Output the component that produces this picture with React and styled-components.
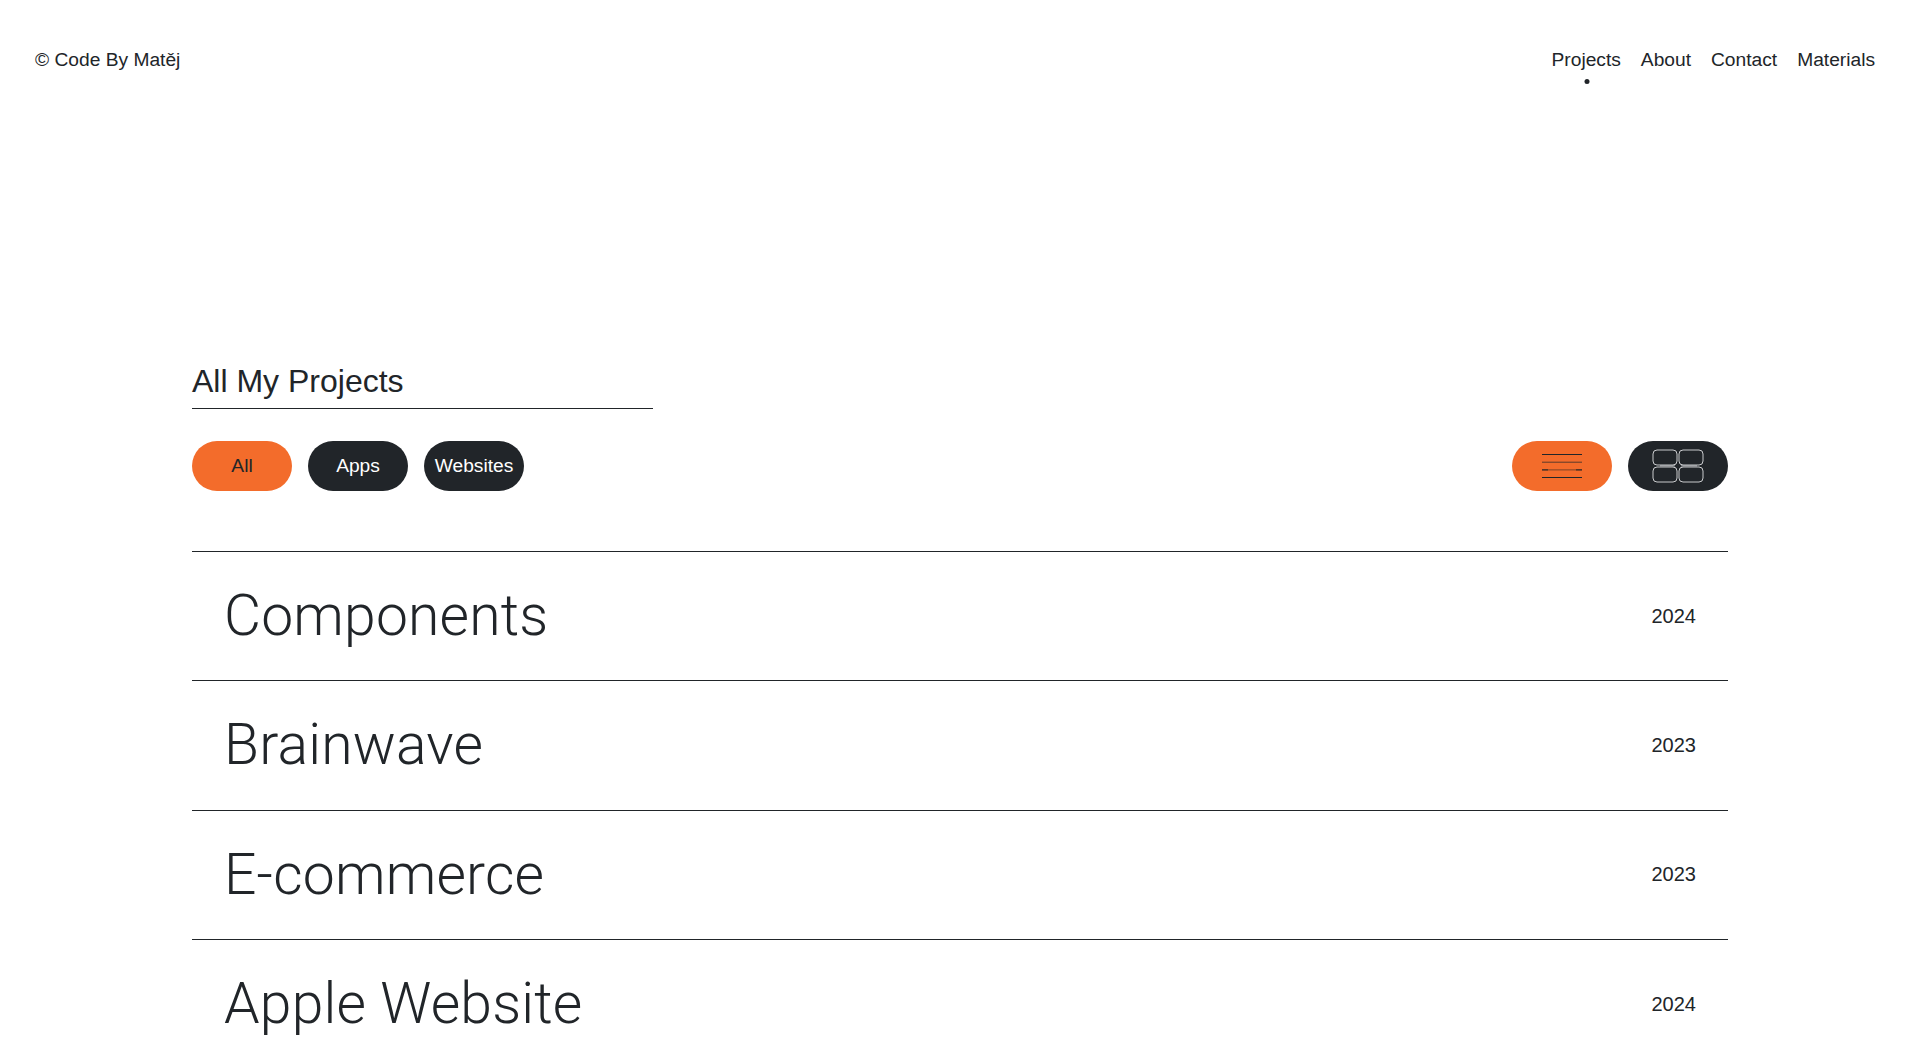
import React from "react";
import styled, { createGlobalStyle } from "styled-components";

const GlobalStyle = createGlobalStyle`
  html, body { margin: 0; padding: 0; background: #ffffff; }
  body {
    font-family: "Liberation Sans", Arial, Helvetica, sans-serif;
    color: #212529;
  }
  * { box-sizing: border-box; }
`;

const ORANGE = "#f36c2b";
const DARK = "#212529";

const Page = styled.div`
  min-height: 1039px;
  background: #fff;
`;

const Header = styled.header`
  display: flex;
  justify-content: space-between;
  align-items: flex-start;
  padding: 49px 35px 0 35px;
`;

const Logo = styled.div`
  font-size: 19.2px;
  line-height: 22px;
  color: ${DARK};
`;

const Nav = styled.nav`
  display: flex;
`;

const NavLink = styled.a`
  position: relative;
  display: block;
  padding: 0 10px;
  font-size: 19.2px;
  line-height: 22px;
  color: ${DARK};
  text-decoration: none;
`;

const ActiveDot = styled.span`
  position: absolute;
  left: 50%;
  top: 30px;
  width: 5px;
  height: 5px;
  margin-left: 1px;
  border-radius: 50%;
  background: ${DARK};
  transform: translateX(-50%);
`;

const Section = styled.main`
  width: 80%;
  margin: 0 auto;
  padding-top: 292px;
`;

const Title = styled.h2`
  width: 30%;
  margin: 0;
  padding-bottom: 8px;
  font-size: 32px;
  font-weight: 400;
  line-height: 36.8px;
  border-bottom: 1px solid ${DARK};
`;

const Toolbar = styled.div`
  display: flex;
  justify-content: space-between;
  margin-top: 32px;
`;

const Group = styled.div`
  display: flex;
  gap: 16px;
`;

const Pill = styled.button`
  width: 100px;
  height: 50px;
  border: none;
  border-radius: 25px;
  padding: 0;
  display: flex;
  align-items: center;
  justify-content: center;
  font-family: "Liberation Sans", Arial, Helvetica, sans-serif;
  font-size: 19.2px;
  background: ${(p) => (p.$active ? ORANGE : DARK)};
  color: ${(p) => (p.$active ? DARK : "#ffffff")};
  cursor: pointer;
`;

const List = styled.ul`
  list-style: none;
  margin: 60px 0 0;
  padding: 0;
`;

const Row = styled.li`
  display: flex;
  align-items: center;
  justify-content: space-between;
  padding: 32px;
  border-top: 1px solid ${DARK};
`;

const ProjectName = styled.span`
  font-family: Roboto, "Liberation Sans", Arial, sans-serif;
  font-weight: 300;
  font-size: 57px;
  line-height: 64.4px;
  letter-spacing: 0.2px;
  color: ${DARK};
`;

const Year = styled.span`
  font-size: 20px;
  line-height: 23px;
  color: ${DARK};
`;

const ListIcon = () => (
  <svg width="42" height="26" viewBox="0 0 42 26" fill="none">
    <line x1="1" y1="1.5" x2="41" y2="1.5" stroke="#212529" strokeWidth="1" />
    <line x1="1" y1="9.2" x2="41" y2="9.2" stroke="#5a3a2a" strokeWidth="1" />
    <line x1="1" y1="16.9" x2="41" y2="16.9" stroke="#7a4228" strokeWidth="1" />
    <line x1="1" y1="16.9" x2="7" y2="16.9" stroke="#212529" strokeWidth="1" />
    <line x1="35" y1="16.9" x2="41" y2="16.9" stroke="#212529" strokeWidth="1" />
    <line x1="1" y1="24.5" x2="41" y2="24.5" stroke="#212529" strokeWidth="1" />
  </svg>
);

const GridIcon = () => (
  <svg width="52" height="34" viewBox="0 0 52 34" fill="none">
    <line x1="8" y1="16.8" x2="23" y2="16.8" stroke="#8a8d90" strokeWidth="1.5" />
    <line x1="29" y1="16.8" x2="45" y2="16.8" stroke="#8a8d90" strokeWidth="1.5" />
    <rect x="1" y="1" width="24" height="15" rx="4" stroke="#c9cbcd" strokeWidth="1" />
    <rect x="27" y="1" width="24" height="15" rx="4" stroke="#c9cbcd" strokeWidth="1" />
    <rect x="1" y="18" width="24" height="15" rx="4" stroke="#c9cbcd" strokeWidth="1" />
    <rect x="27" y="18" width="24" height="15" rx="4" stroke="#c9cbcd" strokeWidth="1" />
  </svg>
);

const projects = [
  { name: "Components", year: "2024" },
  { name: "Brainwave", year: "2023" },
  { name: "E-commerce", year: "2023" },
  { name: "Apple Website", year: "2024" },
];

export default function App() {
  return (
    <Page>
      <GlobalStyle />
      <Header>
        <Logo>© Code By Matěj</Logo>
        <Nav>
          <NavLink href="#">
            Projects
            <ActiveDot />
          </NavLink>
          <NavLink href="#">About</NavLink>
          <NavLink href="#">Contact</NavLink>
          <NavLink href="#">Materials</NavLink>
        </Nav>
      </Header>
      <Section>
        <Title>All My Projects</Title>
        <Toolbar>
          <Group>
            <Pill $active>All</Pill>
            <Pill>Apps</Pill>
            <Pill>Websites</Pill>
          </Group>
          <Group>
            <Pill $active aria-label="List view">
              <ListIcon />
            </Pill>
            <Pill aria-label="Grid view">
              <GridIcon />
            </Pill>
          </Group>
        </Toolbar>
        <List>
          {projects.map((p) => (
            <Row key={p.name}>
              <ProjectName>{p.name}</ProjectName>
              <Year>{p.year}</Year>
            </Row>
          ))}
        </List>
      </Section>
    </Page>
  );
}
